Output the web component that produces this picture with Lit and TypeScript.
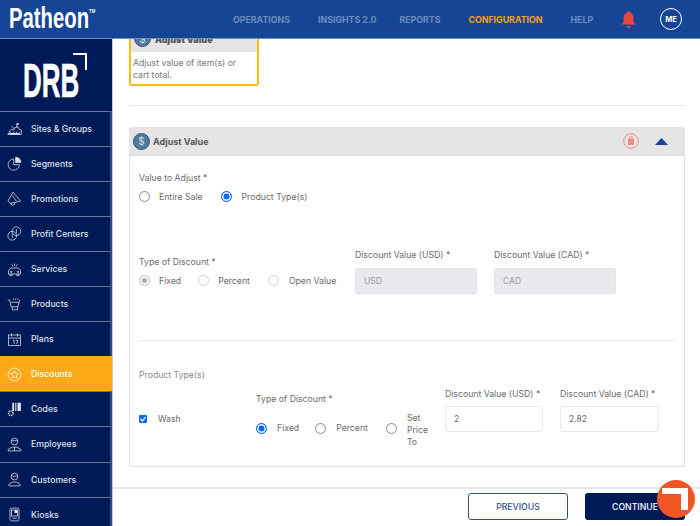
import { LitElement, html, css, svg } from 'lit';
import { customElement } from 'lit/decorators.js';

const i = (body: unknown) => html`<svg class="nav-icon" viewBox="0 0 20 20" fill="none" stroke="currentColor" stroke-width="1">${body}</svg>`;

const NAV = [
  { label: 'Sites & Groups', icon: i(svg`<path d="M1 18h18v-6l-3-1-1-3-5 1-1 3-3-1-2 2zM4 15h2M8 15h2M12 15h2M16 15h1M13 3v5M13 3l3 1-3 1M6 7l3 3" /><path d="M3 16h14v2H3z" fill="currentColor" stroke="none"/>`) },
  { label: 'Segments', icon: i(svg`<path d="M9 4a7.500 7.500 0 1 0 7.500 7.500H9z"/><path d="M11.500 1.500a7 7 0 0 1 7 7h-7z" fill="currentColor"/>`) },
  { label: 'Promotions', icon: i(svg`<path d="M8 1.500l10 12-14 3-2.500-3.500zM5 16.500a2.800 2.800 0 0 0 5.500-1M7 6l5.500 7.500"/>`) },
  { label: 'Profit Centers', icon: i(svg`<circle cx="12.500" cy="7" r="5.800"/><circle cx="7" cy="13" r="5.800"/><path d="M12.500 4v6M7 10v6"/>`) },
  { label: 'Services', icon: i(svg`<path d="M2 11l3-3h10l3 3v5H2zM4 16v2h3v-2M13 16v2h3v-2M6 3l2 3M14 3l-2 3M10 2v3"/><circle cx="5.500" cy="13" r="1"/><circle cx="14.500" cy="13" r="1"/>`) },
  { label: 'Products', icon: i(svg`<path d="M1 4h2.500l2 9h9l2.500-9M5 7h11M7 13v4h7v-4M8 4l1-2M11 4l1-2M14 4l1-2"/>`) },
  { label: 'Plans', icon: i(svg`<rect x="2" y="4" width="16" height="14"/><path d="M2 8h16M6 2v4M14 2v4M8 11h1.500v5M11.500 11h3l-1.500 5"/>`) },
  { label: 'Discounts', icon: i(svg`<circle cx="10" cy="10" r="8.500"/><path d="M10 5l1.500 3.400 3.500.4-2.600 2.400.7 3.600L10 13l-3.100 1.800.7-3.600L5 8.800l3.500-.4z"/>`), active: true },
  { label: 'Codes', icon: i(svg`<path d="M7 1h2.500v11H7zM11 1h1.500v11H11zM14 1h4.500v11H14z" fill="currentColor" stroke="none"/><circle cx="5" cy="15" r="3" stroke-width="2" stroke-dasharray="1.500 1"/>`) },
  { label: 'Employees', icon: i(svg`<circle cx="10" cy="6" r="4.500"/><path d="M5.500 5h9M1.500 18.500v-2l5.500-3h6l5.500 3v2zM10 13.500v5"/>`) },
  { label: 'Customers', icon: i(svg`<circle cx="10" cy="6" r="4.500"/><path d="M5.500 5c2 1 7 1 9 0M2.500 18.500v-2l4.500-3h6l4.500 3v2z"/>`) },
  { label: 'Kiosks', icon: i(svg`<rect x="4" y="1.500" width="12" height="17" rx="2"/><rect x="6" y="4" width="8" height="8"/><path d="M10 4h4v4h-4z" fill="currentColor" stroke="none"/><path d="M7 15h6"/>`) },
];

const dollar = html`<span class="dollar">$</span>`;

@customElement('app-root')
export class AppRoot extends LitElement {
  static styles = css`
    :host {
      display: block;
      width: 700px;
      height: 526px;
      overflow: hidden;
      position: relative;
      font-family: Inter, 'Liberation Sans', sans-serif;
      color: #6b6b6b;
      font-size: 8.700px;
      background: #fff;
    }

    /* Top bar */
    .topbar {
      height: 38px;
      background: #174596;
      border-bottom: 1px solid #6f8fc4;
      display: flex;
      align-items: center;
      position: relative;
      z-index: 1;
    }
    .brand {
      width: 113px;
      flex: none;
      padding-left: 9px;
      margin-top: -2px;
      box-sizing: border-box;
      font-family: 'Liberation Sans', sans-serif;
      font-weight: 700;
      font-size: 29px;
      color: #fff;
      white-space: nowrap;
    }
    .brand span { display: inline-block; transform: scaleX(0.7); transform-origin: left center; }
    .brand sup { font-size: 6px; vertical-align: 15px; }
    .links {
      flex: 1;
      display: flex;
      align-items: center;
      padding-left: 120px;
      font-weight: 700;
      font-size: 8.800px;
      color: #6d8cc0;
      white-space: nowrap;
    }
    .links span { margin-right: 28px; }
    .links span:nth-child(2) { margin-right: 23px; }
    .links .on { color: #f9a11b; }
    .bell { width: 17px; height: 18px; margin-left: -1px; display: block; }
    .me {
      width: 20px;
      height: 20px;
      margin-left: 23px;
      border: 1px solid #fff;
      border-radius: 50%;
      color: #fff;
      font-size: 7.500px;
      font-weight: 700;
      display: flex;
      align-items: center;
      justify-content: center;
    }

    .body { display: flex; height: 487px; }

    /* Sidebar */
    .side {
      width: 113px;
      flex: none;
      background: #001a57;
      border-right: 1px solid #c9d0dc;
      box-sizing: border-box;
      overflow: hidden;
    }
    .logo {
      height: 71.600px;
      display: flex;
      align-items: flex-start;
      padding: 14px 0 0 23px;
      box-sizing: border-box;
    }
    .logo-mark {
      position: relative;
      display: block;
      width: 64px;
      height: 44px;
    }
    .logo-text {
      position: absolute;
      left: 0;
      top: 6px;
      font-family: 'Liberation Sans', sans-serif;
      font-weight: 700;
      font-size: 48px;
      line-height: 44px;
      color: #fff;
      -webkit-text-stroke: 0.600px #fff;
      transform: scaleX(0.54);
      transform-origin: left top;
    }
    .logo-corner {
      position: absolute;
      right: 0;
      top: 0;
      width: 12px;
      height: 15px;
      border-top: 2px solid #fff;
      border-right: 2px solid #fff;
    }
    .item {
      height: 35.100px;
      box-sizing: border-box;
      border-top: 1px solid #69779a;
      border-right: 2px solid #33487c;
      display: flex;
      align-items: center;
      color: #dfe3ed;
      font-size: 8.700px;
      font-weight: 500;
      white-space: nowrap;
      padding-left: 7px;
    }
    .item.active { background: #fba919; color: #fff; border-top-color: #fba919; border-right-color: #fba919; }
    .nav-icon { width: 15px; height: 15px; margin-right: 9px; flex: none; }

    /* Main content */
    .main { flex: 1; overflow: hidden; padding: 0 15px 0 16px; }
    .picked {
      width: 130px;
      height: 47px;
      box-sizing: border-box;
      border: 2px solid #fcbc0c;
      border-top: 0;
      border-radius: 0 0 3px 3px;
      line-height: 12px;
      color: #777;
    }
    .picked-head {
      height: 13px;
      background: #e5e5e5;
      display: flex;
      align-items: center;
      overflow: hidden;
      font-weight: 700;
      font-size: 9px;
      color: #555;
      padding-left: 3px;
      gap: 4px;
    }
    .picked-head .dollar { margin-top: -14px; }
    .picked-head b { margin-top: -12px; }
    .picked p { margin: 0; padding: 5px 10px 5px 2px; }
    .rule { height: 1px; background: #e9e9e9; }
    .rule.top { margin: 19px 0 21px; }

    .card {
      height: 340px;
      box-sizing: border-box;
      border: 1px solid #dfe3ea;
      border-top: 0;
      border-radius: 3px;
      display: flex;
      flex-direction: column;
    }
    .card-head {
      height: 29px;
      flex: none;
      margin: 0 -1px;
      background: #e5e5e5;
      border-bottom: 1px solid #dcdcdc;
      border-radius: 3px 3px 0 0;
      display: flex;
      align-items: center;
      box-sizing: border-box;
      padding: 0 17px 0 4px;
      font-weight: 700;
      font-size: 9px;
      color: #555;
      gap: 3px;
    }
    .dollar {
      width: 17px;
      height: 17px;
      flex: none;
      box-sizing: border-box;
      border-radius: 50%;
      background: #4f7a98;
      border: 1px solid #2c5a80;
      color: #cfe0ea;
      font-size: 10px;
      font-weight: 400;
      display: flex;
      align-items: center;
      justify-content: center;
    }
    .card-head .title { flex: 1; }
    .trash { width: 16px; height: 16px; margin-right: 13px; display: block; }
    .arrow { width: 13px; height: 7px; display: block; }

    .card-body { padding: 0 9px; flex: 1; }
    .label { line-height: 12px; white-space: nowrap; }
    .radios { display: flex; align-items: center; white-space: nowrap; }
    .radio {
      width: 11px;
      height: 11px;
      flex: none;
      box-sizing: border-box;
      border: 1px solid #8a8a8a;
      border-radius: 50%;
      background: #fff;
      margin-right: 9px;
    }
    .radio.on { border-color: #0a6cf5; box-shadow: inset 0 0 0 1.500px #fff; background: #0a6cf5; }
    .radio.off-dis { border-color: #d2d2d2; }
    .radio.dis-on { border-color: #c8c8c8; box-shadow: inset 0 0 0 2px #fff; background: #aaa; }
    .opt { display: flex; align-items: center; margin-right: 18px; }

    .adjust { padding-top: 16px; height: 64px; }
    .adjust .radios { margin-top: 7px; }
    .adjust .opt:last-child .radio { margin-right: 10px; }

    .grid-top {
      margin-top: 13px;
      height: 61px;
      display: grid;
      grid-template-columns: 199px 122px 122px;
      column-gap: 17px;
    }
    .grid-top > .fixed-col { padding-top: 7px; }
    .grid-top .radios { margin-top: 7px; }
    .grid-top .opt:first-child { margin-right: 17px; }
    .grid-top .opt:last-child .radio { margin-right: 10px; }
    .field .input { margin-top: 7px; }
    .input {
      height: 26px;
      box-sizing: border-box;
      border: 1px solid #e6e8ec;
      border-radius: 3px;
      display: flex;
      align-items: center;
      padding: 0 8px;
      color: #666;
      font-size: 8.500px;
    }
    .input.dis { background: #e8eaed; border-color: #e0e3e7; color: #9a9a9a; }

    .rule.inner { margin: 30px 0 28px; }
    .ptype { line-height: 12px; color: #8a8a8a; }

    .grid-bottom {
      display: grid;
      grid-template-columns: 117px 189px 98px 116px;
      margin-top: 7px;
    }
    .wash { display: flex; align-items: center; padding-top: 15px; height: 32px; }
    .check {
      width: 8px;
      height: 8px;
      border-radius: 1px;
      background: #0a6cf5;
      margin-right: 11px;
      display: block;
    }
    .discount-type { padding-top: 5px; }
    .discount-type .radios { margin-top: 5px; }
    .discount-type .radio { margin-right: 10px; }
    .discount-type .opt { margin-right: 18px; }
    .discount-type .opt:first-child { margin-right: 16px; }
    .multi { line-height: 12px; white-space: normal; width: 26px; margin: 2px 0 -2px; }
    .grid-bottom .field:last-child > * { margin-left: 17px; }
    .grid-bottom .field .input { margin-top: 6px; }

    /* Footer */
    .footer {
      position: absolute;
      left: 113px;
      right: 0;
      top: 487px;
      height: 39px;
      box-sizing: border-box;
      border-top: 2px solid #e8e8e8;
      background: #fff;
      display: flex;
      justify-content: flex-end;
      align-items: flex-start;
      gap: 17px;
      padding: 4px 15px 0 0;
    }
    .btn {
      width: 100px;
      height: 27px;
      box-sizing: border-box;
      border-radius: 3px;
      display: flex;
      align-items: center;
      justify-content: center;
      font-size: 8.700px;
      font-weight: 500;
    }
    .btn.ghost { border: 1px solid #364f86; color: #364f86; }
    .btn.solid { background: #001a57; color: #fff; }

    /* Floating help launcher */
    .launcher {
      position: absolute;
      left: 657px;
      top: 480px;
      width: 38px;
      height: 38px;
      border-radius: 50%;
      background: #f15525;
    }
    .launcher::after {
      content: '';
      position: absolute;
      left: 5px;
      top: 8px;
      width: 19px;
      height: 16px;
      border-top: 6px solid #fff;
      border-right: 7px solid #fff;
    }
  `;

  render() {
    return html`
      <div class="topbar">
        <div class="brand"><span>Patheon<sup>TM</sup></span></div>
        <div class="links">
          <span>OPERATIONS</span>
          <span>INSIGHTS 2.0</span>
          <span>REPORTS</span>
          <span class="on">CONFIGURATION</span>
          <span>HELP</span>
          <svg class="bell" viewBox="0 0 17 18" fill="#e8483f">
            <path d="M8.500 1a1.500 1.500 0 0 1 1.500 1.500c2.500 1 3.500 3 3.500 5.500v4l2 2.500H1.500l2-2.500V8c0-2.500 1-4.500 3.500-5.500A1.500 1.500 0 0 1 8.500 1zM6.500 16h4a2 2 0 0 1-4 0z"/>
          </svg>
          <div class="me">ME</div>
        </div>
      </div>
      <div class="body">
        <aside class="side">
          <div class="logo">
            <span class="logo-mark"><span class="logo-text">DRB</span><i class="logo-corner"></i></span>
          </div>
          ${NAV.map(n => html`
            <div class="item ${n.active ? 'active' : ''}">${n.icon}${n.label}</div>
          `)}
        </aside>
        <main class="main">
          <div class="picked">
            <div class="picked-head">${dollar}<b>Adjust Value</b></div>
            <p>Adjust value of item(s) or cart total.</p>
          </div>
          <div class="rule top"></div>
          <section class="card">
            <div class="card-head">
              ${dollar}
              <span class="title">Adjust Value</span>
              <svg class="trash" viewBox="0 0 16 16" fill="none">
                <circle cx="8" cy="8" r="7.300" stroke="#f08a8a"/>
                <path d="M5 5.500h6V12H5z" fill="#f08a8a"/>
                <path d="M6 4h4" stroke="#f08a8a"/>
              </svg>
              <svg class="arrow" viewBox="0 0 13 7"><path d="M6.500 0l6.500 7H0z" fill="#174596"/></svg>
            </div>
            <div class="card-body">
              <div class="adjust">
                <div class="label">Value to Adjust *</div>
                <div class="radios">
                  <label class="opt"><span class="radio"></span>Entire Sale</label>
                  <label class="opt"><span class="radio on"></span>Product Type(s)</label>
                </div>
              </div>
              <div class="grid-top">
                <div class="fixed-col">
                  <div class="label">Type of Discount *</div>
                  <div class="radios">
                    <label class="opt"><span class="radio dis-on"></span>Fixed</label>
                    <label class="opt"><span class="radio off-dis"></span>Percent</label>
                    <label class="opt"><span class="radio off-dis"></span>Open Value</label>
                  </div>
                </div>
                <div class="field">
                  <div class="label">Discount Value (USD) *</div>
                  <div class="input dis">USD</div>
                </div>
                <div class="field">
                  <div class="label">Discount Value (CAD) *</div>
                  <div class="input dis">CAD</div>
                </div>
              </div>
              <div class="rule inner"></div>
              <div class="ptype">Product Type(s)</div>
              <div class="grid-bottom">
                <div class="wash">
                  <svg class="check" viewBox="0 0 8 8"><path d="M1.500 4l2 2 3-4" fill="none" stroke="#fff" stroke-width="1.200"/></svg>
                  Wash
                </div>
                <div class="discount-type">
                  <div class="label">Type of Discount *</div>
                  <div class="radios">
                    <label class="opt"><span class="radio on"></span>Fixed</label>
                    <label class="opt"><span class="radio"></span>Percent</label>
                    <label class="opt"><span class="radio"></span><span class="multi">Set Price To</span></label>
                  </div>
                </div>
                <div class="field">
                  <div class="label">Discount Value (USD) *</div>
                  <div class="input">2</div>
                </div>
                <div class="field">
                  <div class="label">Discount Value (CAD) *</div>
                  <div class="input">2.82</div>
                </div>
              </div>
            </div>
          </section>
        </main>
      </div>
      <footer class="footer">
        <div class="btn ghost">PREVIOUS</div>
        <div class="btn solid">CONTINUE</div>
      </footer>
      <div class="launcher"></div>
    `;
  }
}
